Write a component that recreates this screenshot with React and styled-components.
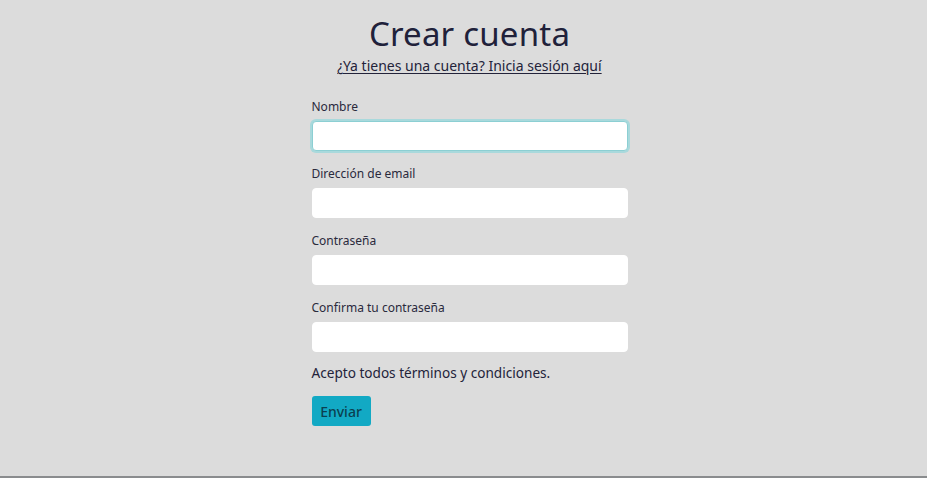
import styled, { createGlobalStyle } from "styled-components"

const GlobalStyle = createGlobalStyle`
  html, body {
    margin: 0;
    padding: 0;
    background: #dcdcdc;
  }
  body {
    font-family: "Noto Sans", "Open Sans", sans-serif;
    color: #23233a;
  }
`

const Page = styled.div`
  height: 476px;
  border-bottom: 2px solid #8a8c8e;
  display: flex;
  justify-content: center;
  padding-left: 12px;
  background: #dcdcdc;
`

const Wrap = styled.div`
  width: 316px;
  padding-top: 14px;
  display: flex;
  flex-direction: column;
`

const Title = styled.h1`
  margin: 0;
  text-align: center;
  font-size: 33px;
  font-weight: 400;
  line-height: 40px;
  color: #20213a;
  letter-spacing: 0.2px;
`

const LoginLink = styled.a`
  align-self: center;
  margin-top: 2px;
  font-size: 14px;
  line-height: 20px;
  color: #23233a;
  text-decoration: underline;
  text-underline-offset: 2px;
  cursor: pointer;
`

const Form = styled.form`
  margin-top: 23px;
  display: flex;
  flex-direction: column;
`

const Field = styled.div`
  display: flex;
  flex-direction: column;
  margin-bottom: 15px;
  &:last-of-type {
    margin-bottom: 11px;
  }
`

const Label = styled.label`
  font-size: 12px;
  line-height: 16px;
  color: #2a2a3c;
  margin-bottom: 6px;
`

const Input = styled.input`
  box-sizing: border-box;
  height: 30px;
  width: 100%;
  border: 1px solid ${p => (p.$focused ? "#8ccfd3" : "#fff")};
  box-shadow: ${p => (p.$focused ? "0 0 0 2px #a9d9dc" : "none")};
  border-radius: 4px;
  background: #fff;
  outline: none;
  font: inherit;
  padding: 0 10px;
`

const Terms = styled.p`
  margin: 0;
  font-size: 13.6px;
  line-height: 20px;
  color: #23233a;
`

const Submit = styled.button`
  align-self: flex-start;
  margin-top: 13px;
  width: 59px;
  height: 30px;
  border: none;
  border-radius: 3px;
  background: #12a9c4;
  color: #0b3f50;
  font-family: inherit;
  font-size: 14px;
  font-weight: 500;
  padding: 0;
  cursor: pointer;
`

const fields = [
  { label: "Nombre", type: "text", focused: true },
  { label: "Dirección de email", type: "email" },
  { label: "Contraseña", type: "password" },
  { label: "Confirma tu contraseña", type: "password" },
]

const App = () => {
  return (
    <>
      <GlobalStyle />
      <Page>
        <Wrap>
          <Title>Crear cuenta</Title>
          <LoginLink>¿Ya tienes una cuenta? Inicia sesión aquí</LoginLink>
          <Form onSubmit={e => e.preventDefault()}>
            {fields.map(f => (
              <Field key={f.label}>
                <Label>{f.label}</Label>
                <Input type={f.type} $focused={f.focused} />
              </Field>
            ))}
            <Terms>Acepto todos términos y condiciones.</Terms>
            <Submit type="submit">Enviar</Submit>
          </Form>
        </Wrap>
      </Page>
    </>
  )
}

export default App
